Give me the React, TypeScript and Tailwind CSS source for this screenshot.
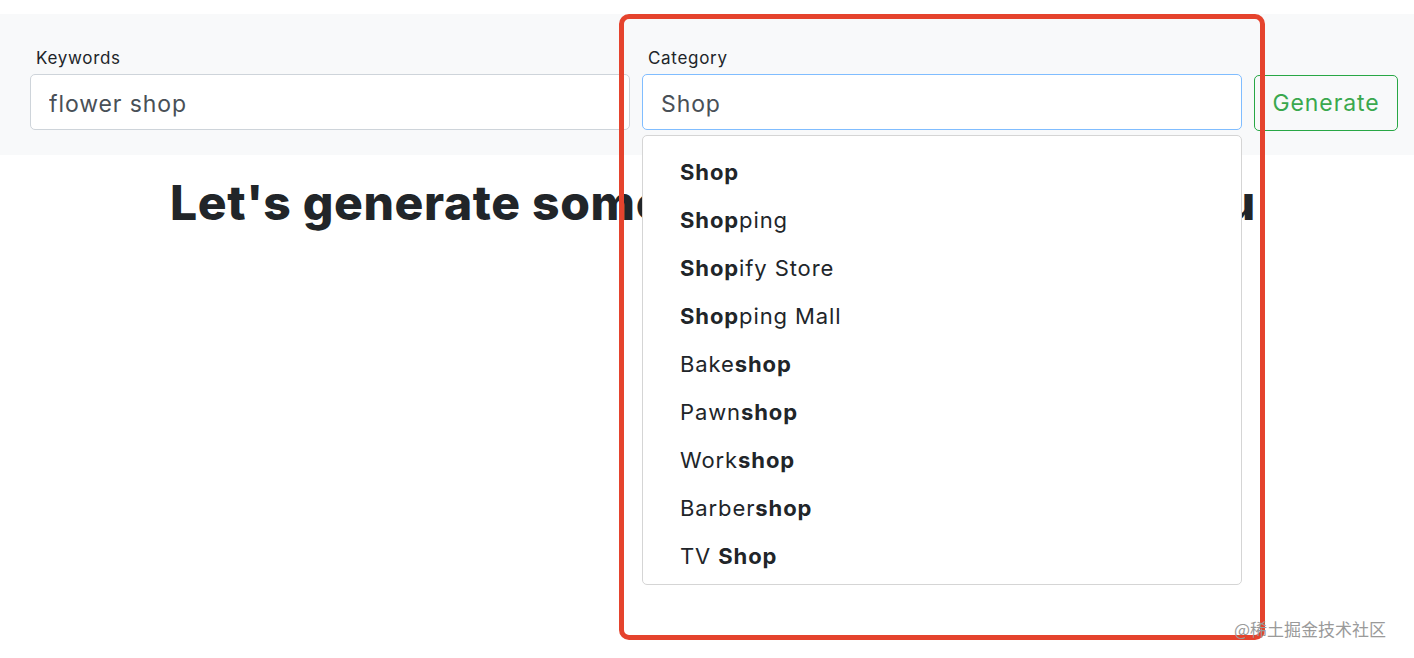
import React from 'react'

const options: { pre: string; bold: string; post: string }[] = [
  { pre: '', bold: 'Shop', post: '' },
  { pre: '', bold: 'Shop', post: 'ping' },
  { pre: '', bold: 'Shop', post: 'ify Store' },
  { pre: '', bold: 'Shop', post: 'ping Mall' },
  { pre: 'Bake', bold: 'shop', post: '' },
  { pre: 'Pawn', bold: 'shop', post: '' },
  { pre: 'Work', bold: 'shop', post: '' },
  { pre: 'Barber', bold: 'shop', post: '' },
  { pre: 'TV\u00a0', bold: 'Shop', post: '' },
]

export default function App() {
  return (
    <div className="relative w-[1414px] h-[658px] bg-white overflow-hidden text-[#212529] font-['Inter',sans-serif]">
      {/* Search bar */}
      <div className="mt-[14px] h-[141px] bg-[#f8f9fa] flex items-start gap-3 pl-[30px] pr-4 pt-[37px]">
        <div className="flex-1 flex flex-col">
          <label className="px-[6px] text-[17px] tracking-[0.7px] leading-[14px] mb-[9px]">Keywords</label>
          <input
            readOnly
            value="flower shop"
            className="h-[56px] rounded-[5px] border border-[#ced4da] bg-white px-[18px] pt-[3px] text-[23px] tracking-[0.9px] text-[#495057] outline-none"
          />
        </div>
        <div className="flex-1 flex flex-col relative">
          <label className="px-[6px] text-[17px] tracking-[0.7px] leading-[14px] mb-[9px]">Category</label>
          <input
            readOnly
            value="Shop"
            className="h-[56px] rounded-[5px] border border-[#80bdff] bg-white px-[18px] pt-[3px] text-[23px] tracking-[0.9px] text-[#495057] outline-none"
          />
          {/* Suggestions */}
          <ul className="absolute left-0 right-0 top-[84px] z-10 rounded-[5px] border border-[#d5d5d5] bg-white pt-3 pb-1">
            {options.map((o, i) => (
              <li key={i} className="h-[48px] leading-[48px] pl-[37px] text-[22px] tracking-[0.9px] whitespace-pre">
                {o.pre}
                <span className="font-bold">{o.bold}</span>
                {o.post}
              </li>
            ))}
          </ul>
        </div>
        <button className="mt-[24px] h-[56px] w-[144px] rounded-[5px] border border-[#28a745] text-[#3aa84e] text-[23px] tracking-[0.9px]">
          Generate
        </button>
      </div>

      <h1 className="text-center text-[48px] font-extrabold mt-[18px] pl-[12px] leading-[60px] tracking-[0.65px]">
        Let's generate some business names for you
      </h1>

      {/* Annotation */}
      <div className="absolute left-[619px] top-[14px] w-[646px] h-[626px] rounded-[10px] border-[5px] border-[#e5432d] z-20" />
      <div className="absolute left-[1234px] top-[616px] text-[17px] text-[#9a9a9a] font-['Noto_Sans_CJK_SC',sans-serif] z-30">
        @稀土掘金技术社区
      </div>
    </div>
  )
}
